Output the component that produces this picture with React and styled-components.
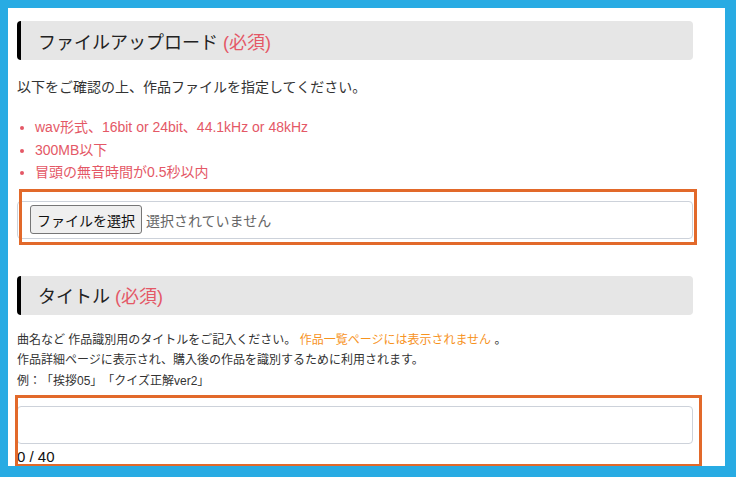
import React, { useState } from 'react';
import styled, { createGlobalStyle } from 'styled-components';

const GlobalStyle = createGlobalStyle`
  html, body {
    margin: 0;
    padding: 0;
    background: #28abe3;
  }
  body {
    font-family: "Liberation Sans", "Noto Sans CJK JP", sans-serif;
    color: #333;
    text-spacing-trim: space-all;
  }
`;

// --- Styled Components ---
const Page = styled.div`
  padding: 8px 11px 0 8px;
  height: 477px;
  box-sizing: border-box;
`;

const Panel = styled.main`
  height: 458px;
  background: #fff;
  box-sizing: border-box;
  padding: 13px 32px 0 9px;
  overflow: hidden;
`;

const Section = styled.section`
  margin-bottom: ${({ gap }) => gap || 0}px;
`;

const Heading = styled.h2`
  margin: 0;
  height: 39px;
  display: flex;
  align-items: center;
  padding-left: 17px;
  background: #e6e6e6;
  border-left: 4px solid #000;
  border-radius: 4px;
  font-size: 18px;
  font-weight: 400;
  color: #222;
`;

const Required = styled.span`
  color: #e45866;
  margin-left: 5px;
`;

const Lead = styled.p`
  margin: 17px 0 0;
  font-size: 14px;
  line-height: 21px;
`;

const Rules = styled.ul`
  margin: 18px 0 0;
  padding-left: 18px;
  color: #e45866;
  font-size: 14px;
  line-height: 22.5px;
`;

const Note = styled.div`
  margin-top: 15px;
  font-size: 12px;
  line-height: 20.5px;
  color: #333;
`;

const Accent = styled.span`
  color: #f7931e;
`;

const FieldWrap = styled.div`
  position: relative;
  margin-top: ${({ top }) => top}px;
`;

const Highlight = styled.div`
  position: absolute;
  top: ${({ t }) => t}px;
  left: ${({ l }) => l}px;
  right: ${({ r }) => r}px;
  bottom: ${({ b }) => b}px;
  border: 3px solid #e2692a;
  pointer-events: none;
`;

const FileBox = styled.label`
  display: flex;
  align-items: center;
  gap: 4px;
  height: 38px;
  box-sizing: border-box;
  padding: 0 12px;
  border: 1px solid #cdd2da;
  border-radius: 4px;
  cursor: pointer;
`;

const FileButton = styled.span`
  display: inline-flex;
  align-items: center;
  height: 29px;
  box-sizing: border-box;
  padding: 0 6px;
  border: 1px solid #767676;
  border-radius: 3px;
  background: #efefef;
  font-size: 14px;
  color: #111;
`;

const FileName = styled.span`
  font-size: 14px;
  color: #666;
`;

const TextInput = styled.input`
  display: block;
  width: 100%;
  height: 38px;
  box-sizing: border-box;
  padding: 0 12px;
  border: 1px solid #cdd2da;
  border-radius: 4px;
  font: inherit;
  font-size: 14px;
  outline: none;
`;

const Counter = styled.div`
  margin-top: 4px;
  font-size: 15px;
  line-height: 17px;
  color: #111;
`;

// --- Component ---
export default function App() {
  const [fileName, setFileName] = useState('');
  const [title, setTitle] = useState('');

  return (
    <Page>
      <GlobalStyle />
      <Panel>
        <Section gap={37}>
          <Heading>ファイルアップロード<Required>(必須)</Required></Heading>
          <Lead>以下をご確認の上、作品ファイルを指定してください。</Lead>
          <Rules>
            <li>wav形式、16bit or 24bit、44.1kHz or 48kHz</li>
            <li>300MB以下</li>
            <li>冒頭の無音時間が0.5秒以内</li>
          </Rules>
          <FieldWrap top={17}>
            <FileBox>
              <FileButton>ファイルを選択</FileButton>
              <FileName>{fileName || '選択されていません'}</FileName>
              <input
                type="file"
                accept=".wav"
                style={{ display: 'none' }}
                onChange={e => setFileName(e.target.files?.[0]?.name || '')}
              />
            </FileBox>
            <Highlight t={-12} l={2} r={-4} b={-6} />
          </FieldWrap>
        </Section>

        <Section>
          <Heading>タイトル<Required>(必須)</Required></Heading>
          <Note>
            曲名など 作品識別用のタイトルをご記入ください。 <Accent>作品一覧ページには表示されません</Accent> 。<br />
            作品詳細ページに表示され、購入後の作品を識別するために利用されます。<br />
            例：「挨拶05」「クイズ正解ver2」
          </Note>
          <FieldWrap top={15}>
            <TextInput
              maxLength={40}
              value={title}
              onChange={e => setTitle(e.target.value)}
            />
            <Counter>{title.length} / 40</Counter>
            <Highlight t={-11} l={-2} r={-9} b={-2} />
          </FieldWrap>
        </Section>
      </Panel>
    </Page>
  );
}
